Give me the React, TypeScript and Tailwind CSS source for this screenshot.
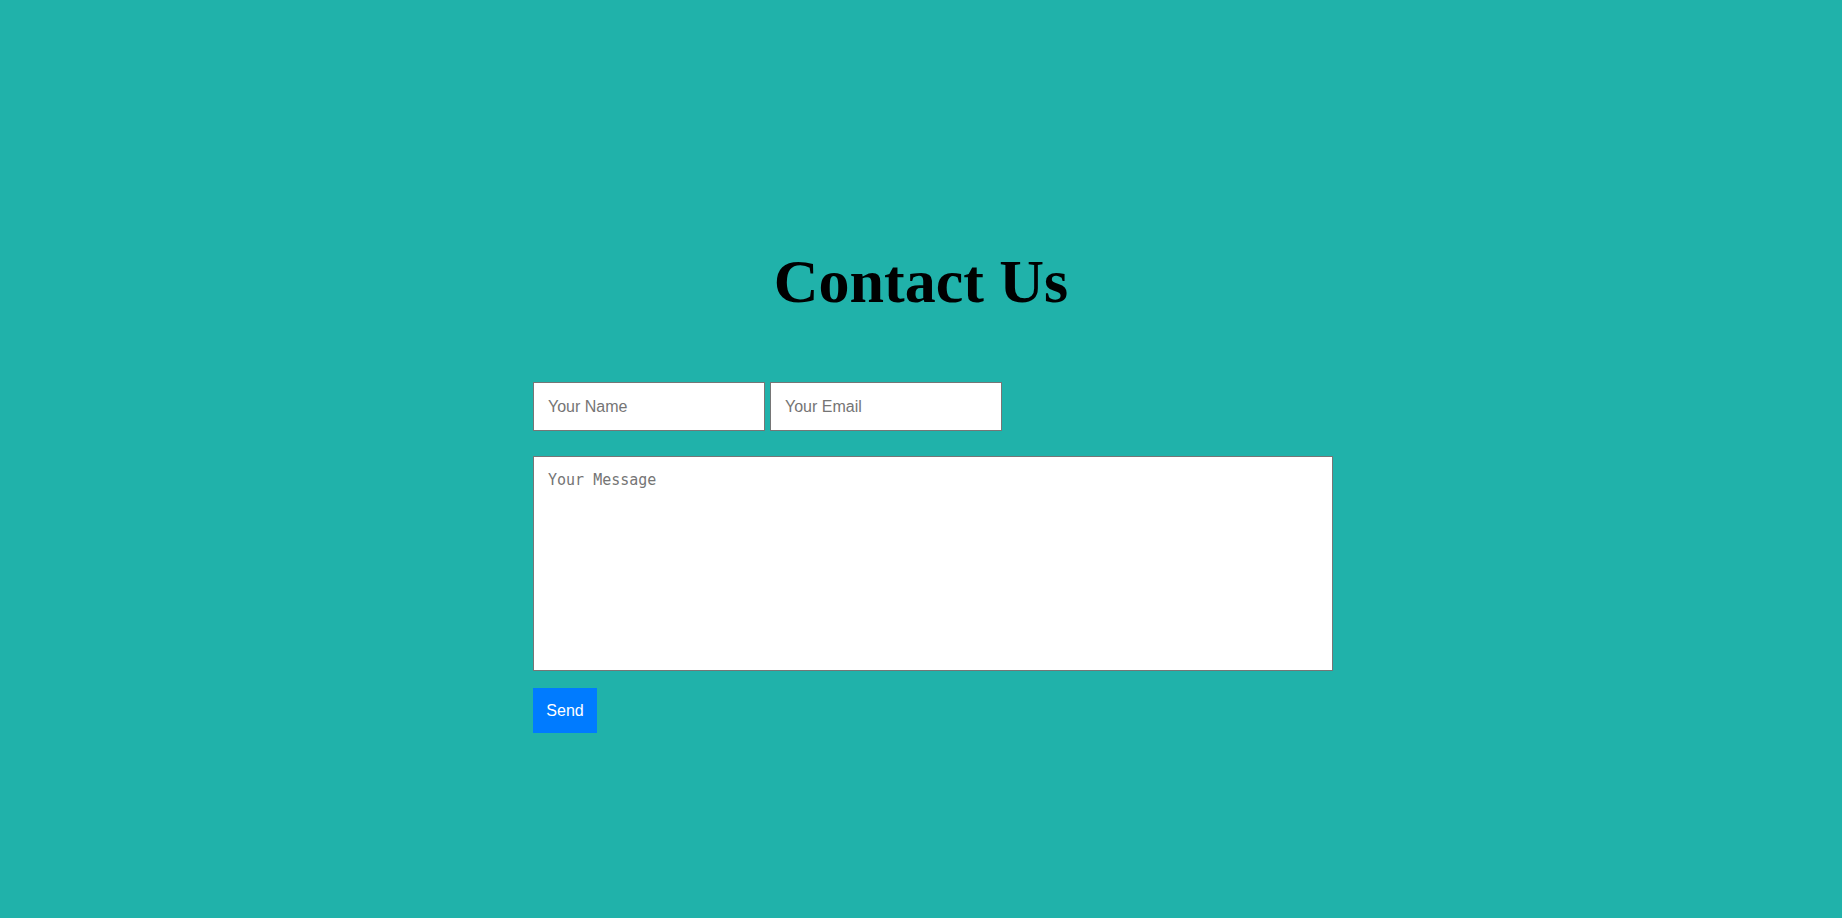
export default function App() {
  return (
    <div className="min-h-screen w-full bg-[#20b2aa] pt-[250px]">
      <h1 className="text-center font-['Liberation_Serif',serif] text-[62px] font-bold leading-[62px] text-black">
        Contact Us
      </h1>

      <form className="mx-auto mt-[70px] w-[824px] pl-6" onSubmit={(e) => e.preventDefault()}>
        <div className="flex gap-[5px]">
          <input
            type="text"
            placeholder="Your Name"
            className="h-[49px] w-[232px] border border-[#767676] bg-white px-[14px] font-['Liberation_Sans',Arial,sans-serif] text-[16px] text-black outline-none placeholder:text-[#757575]"
          />
          <input
            type="email"
            placeholder="Your Email"
            className="h-[49px] w-[232px] border border-[#767676] bg-white px-[14px] font-['Liberation_Sans',Arial,sans-serif] text-[16px] text-black outline-none placeholder:text-[#757575]"
          />
        </div>

        <textarea
          placeholder="Your Message"
          className="mt-[25px] block h-[215px] w-[800px] resize-none border border-[#767676] bg-white p-[14px] font-['DejaVu_Sans_Mono',monospace] text-[15px] leading-[18px] text-black outline-none placeholder:text-[#757575]"
        />

        <button
          type="submit"
          className="mt-[17px] flex h-[45px] w-[64px] items-center justify-center bg-[#007bff] font-['Liberation_Sans',Arial,sans-serif] text-[16px] text-white"
        >
          Send
        </button>
      </form>
    </div>
  );
}
